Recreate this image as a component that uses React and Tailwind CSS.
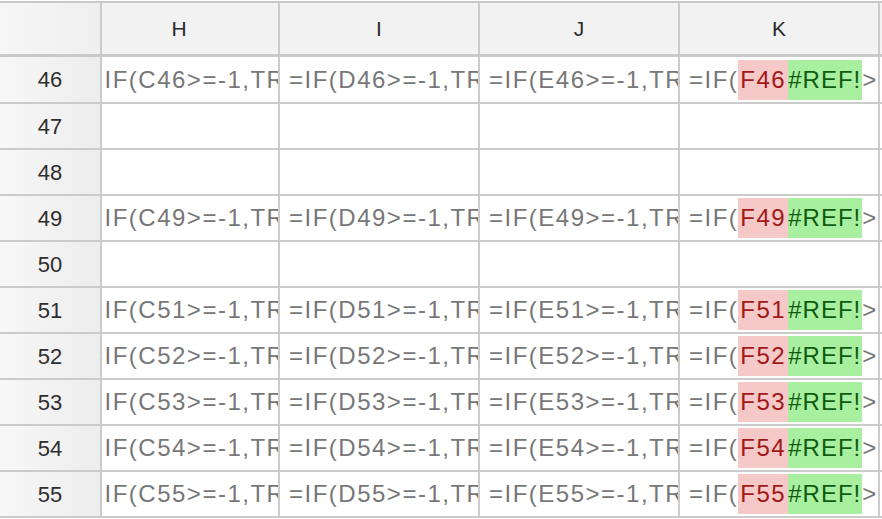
const cols = ["H", "I", "J", "K", "L"];

const rows = [
  { n: 46, f: true },
  { n: 47 },
  { n: 48 },
  { n: 49, f: true },
  { n: 50 },
  { n: 51, f: true },
  { n: 52, f: true },
  { n: 53, f: true },
  { n: 54, f: true },
  { n: 55, f: true },
];

const font = { fontFamily: '"Liberation Sans", Arial, sans-serif' };

const Cell = ({ children }) => (
  <div className="w-[200px] shrink-0 h-full border-r-2 border-[#cbcbcb] overflow-hidden flex items-center pl-[9px] whitespace-nowrap">
    {children}
  </div>
);

const FormulaRow = ({ n }) => (
  <>
    <Cell>{`=IF(C${n}>=-1,TRUE,FALSE)`}</Cell>
    <Cell>{`=IF(D${n}>=-1,TRUE,FALSE)`}</Cell>
    <Cell>{`=IF(E${n}>=-1,TRUE,FALSE)`}</Cell>
    <Cell>
      =IF(
      <span className="bg-[#f7c8c8] text-[#a01818] px-[2px] py-[2px]">{`F${n}`}</span>
      <span className="bg-[#a8f0a0] text-[#0f5c10] tracking-[1px] pr-[1px] py-[2px]">#REF!</span>
      {">=-1,TRUE,FALSE)"}
    </Cell>
    <Cell />
  </>
);

export default function App() {
  return (
    <div
      className="w-[882px] h-[519px] overflow-hidden bg-white pt-px text-[#333333]"
      style={font}
    >
      {/* column header ============================ */}
      <div className="flex h-[56px] border-t-2 border-b-[3px] border-[#c9c9c9] bg-[#f2f2f2]">
        <div className="w-[102px] shrink-0 border-r-2 border-[#cbcbcb] bg-gradient-to-r from-[#f6f6f6] to-[#efefef]" />
        <div className="flex-1 overflow-hidden">
          <div className="flex h-full -ml-[22px]">
            {cols.map((c) => (
              <div
                key={c}
                className="w-[200px] shrink-0 h-full border-r-2 border-[#cbcbcb] flex items-center justify-center text-[21px] text-[#2a2a2a]"
              >
                {c}
              </div>
            ))}
          </div>
        </div>
      </div>

      {/* rows ===================================== */}
      {rows.map((r, i) => (
        <div
          key={r.n}
          className={`flex border-b-2 border-[#cbcbcb] ${i === 0 ? "h-[47px]" : "h-[46px]"}`}
        >
          <div className="w-[102px] shrink-0 border-r-2 border-[#cbcbcb] bg-gradient-to-r from-[#f7f7f7] to-[#ededed] flex items-center justify-center text-[22px] text-[#2e2e2e]">
            {r.n}
          </div>
          <div className="flex-1 overflow-hidden">
            <div className="flex h-full -ml-[22px] text-[24px] tracking-[1.5px] text-[#777777]">
              {r.f ? (
                <FormulaRow n={r.n} />
              ) : (
                cols.map((c) => <Cell key={c} />)
              )}
            </div>
          </div>
        </div>
      ))}
    </div>
  );
}
